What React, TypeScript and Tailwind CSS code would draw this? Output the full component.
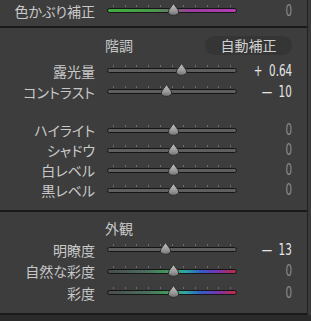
import React from "react";

const JP = "font-['Noto_Sans_CJK_JP','Noto_Sans',sans-serif] [font-feature-settings:'palt']";
const NUM = "font-['DejaVu_Sans_Condensed','Liberation_Sans',sans-serif]";

type Kind = "plain" | "tint" | "spectrum";

function Thumb({ x }: { x: number }) {
  return (
    <svg
      className="absolute top-[3px]"
      style={{ left: x - 6.5 }}
      width="13"
      height="13"
      viewBox="0 0 13 13"
    >
      <defs>
        <linearGradient id="tg" x1="0" y1="0" x2="0" y2="1">
          <stop offset="0" stopColor="#c4c4c4" />
          <stop offset="0.6" stopColor="#9a9a9a" />
          <stop offset="1" stopColor="#6e6e6e" />
        </linearGradient>
      </defs>
      <path
        d="M6.5 0.6 L11 6.8 Q12.6 9.4 10.6 11.2 Q9 12.4 6.5 12.4 Q4 12.4 2.4 11.2 Q0.4 9.4 2 6.8 Z"
        fill="url(#tg)"
        stroke="#262626"
        strokeWidth="0.9"
      />
    </svg>
  );
}

function Slider({ pos, kind }: { pos: number; kind: Kind }) {
  const ticks = Array.from({ length: 11 }, (_, i) => 6 + i * 11.7);
  let fill = "bg-[#5e5e5e]";
  if (kind === "tint")
    fill =
      "bg-[linear-gradient(to_right,#3fae3f_0%,#4a9a4a_35%,#6e6e6e_50%,#9a3c9c_65%,#b23cb4_100%)]";
  if (kind === "spectrum")
    fill =
      "bg-[linear-gradient(to_right,#4a4a4a_0%,#4a6e5e_30%,#3fa35a_50%,#2fa8a0_60%,#3060c8_72%,#7035b8_84%,#c02a40_100%)]";
  return (
    <div className="relative w-[130px] h-full">
      {ticks.map((t, i) => (
        <div
          key={i}
          className="absolute top-[5px] w-px h-[2px] bg-[#6c6c6c]"
          style={{ left: t }}
        />
      ))}
      <div
        className={`absolute left-0 right-0 top-[8px] h-[5px] rounded-full border border-[#161616] ${fill}`}
      />
      <Thumb x={pos - 107} />
    </div>
  );
}

function Row({
  label,
  pos,
  sign,
  value,
  kind = "plain",
  bright = false,
  h = "h-[21px]",
}: {
  label: string;
  pos: number;
  sign?: string;
  value: string;
  kind?: Kind;
  bright?: boolean;
  h?: string;
}) {
  const color = bright ? "text-[#e6e6e6]" : "text-[#8c8c8c]";
  return (
    <div className={`flex items-center ${h}`}>
      <div className={`w-[95px] text-right text-[14px] leading-none text-[#c8c8c8] ${JP}`}>
        {label}
      </div>
      <div className="ml-[12px] h-[21px]">
        <Slider pos={pos} kind={kind} />
      </div>
      <div className="w-[55px] flex justify-end">
        <div
          className={`origin-right scale-x-[0.72] flex items-center gap-[9px] text-[16px] leading-none ${NUM} ${color}`}
        >
          {sign && <span>{sign}</span>}
          <span>{value}</span>
        </div>
      </div>
    </div>
  );
}

function Header({ title, button }: { title: string; button?: boolean }) {
  return (
    <div className="flex items-center h-[20px]">
      <div className={`ml-[105px] text-[14px] leading-none text-[#c8c8c8] ${JP}`}>{title}</div>
      {button && (
        <div
          className={`ml-auto mr-[15px] w-[87px] h-[19px] rounded-full bg-[#353535] flex items-center justify-center text-[14px] leading-none text-[#d0d0d0] ${JP}`}
        >
          自動補正
        </div>
      )}
    </div>
  );
}

export default function App() {
  return (
    <div className="w-[311px] h-[321px] bg-[#3a3a3a] overflow-hidden flex flex-col">
      <div className="w-[308px] border-r border-[#222] bg-[#3d3d3d] flex flex-col">
        <div className="pb-[5px] border-b-2 border-[#1a1a1a]">
          <Row label="色かぶり補正" pos={173} value="0" kind="tint" />
        </div>
        <div className="pt-[7px] pb-[10px] border-b-2 border-[#1a1a1a]">
          <Header title="階調" button />
          <div className="mt-[5px]">
            <Row label="露光量" pos={181} sign="+" value="0.64" bright />
            <Row label="コントラスト" pos={166} sign="—" value="10" bright />
          </div>
          <div className="mt-[18px]">
            <Row label="ハイライト" pos={173} value="0" h="h-[20px]" />
            <Row label="シャドウ" pos={173} value="0" h="h-[20px]" />
            <Row label="白レベル" pos={173} value="0" h="h-[20px]" />
            <Row label="黒レベル" pos={173} value="0" h="h-[20px]" />
          </div>
        </div>
        <div className="pt-[6px] pb-[9px] border-b-2 border-[#1a1a1a]">
          <Header title="外観" />
          <div className="mt-[1px]">
            <Row label="明瞭度" pos={165} sign="—" value="13" bright h="h-[21.5px]" />
            <Row label="自然な彩度" pos={173} value="0" kind="spectrum" h="h-[21.5px]" />
            <Row label="彩度" pos={173} value="0" kind="spectrum" h="h-[21.5px]" />
          </div>
        </div>
      </div>
      <div className="flex-1 bg-[#2a2a2a]" />
    </div>
  );
}
